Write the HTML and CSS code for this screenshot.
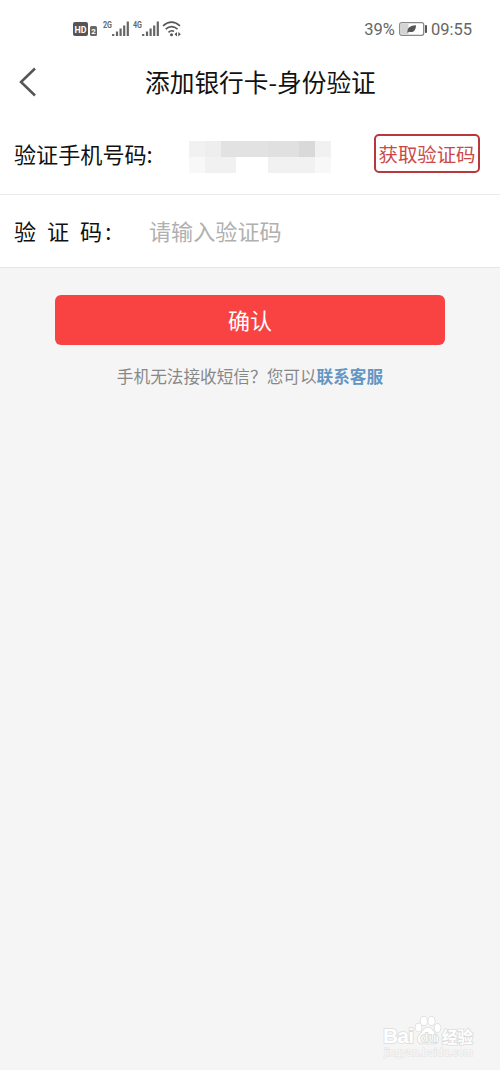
FILE: index.html
```html
<!DOCTYPE html>
<html lang="zh-CN">
<head>
    <meta charset="UTF-8">
    <title>添加银行卡-身份验证</title>
    <link rel="stylesheet" href="styles.css">
</head>
<body>
    <div class="status-bar">
        <svg class="signals" width="112" height="24" viewBox="0 0 112 24">
            <rect x="1" y="5" width="15" height="14" rx="2" fill="#555"/>
            <text x="8.5" y="15.5" class="hd" textLength="12" lengthAdjust="spacingAndGlyphs">HD</text>
            <rect x="18" y="9" width="7" height="10" rx="1.5" fill="#666"/>
            <text x="21.5" y="17" class="sim">2</text>
            <text x="31" y="11" class="net" textLength="9" lengthAdjust="spacingAndGlyphs">2G</text>
            <path d="M41.2 17v2M45 14.5v4.5M48.6 11.5v7.5M52.2 8.5v10.5M55.800 4.500v14.500" class="bars"/>
            <text x="61" y="11" class="net" textLength="9" lengthAdjust="spacingAndGlyphs">4G</text>
            <path d="M71.200 17v2M75 14.500v4.500M78.600 11.500v7.500M82.200 8.500v10.500M85.800 4.500v14.500" class="bars"/>
            <path d="M91 8.800Q99.500 1.500 108 8.800M93.700 12.200Q99.500 7.200 105.600 12.200M96.500 15.300Q99.500 12.700 102 14.500" class="wifi"/>
            <circle cx="99.500" cy="17.700" r="1.500" fill="#555"/>
            <path d="M105 15l-2.500 2.200 2.500 2.200zM106.300 15l2.500 2.200-2.500 2.200z" fill="#555"/>
        </svg>
        <div class="power">
            <span>39%</span>
            <svg width="28" height="14" viewBox="0 0 28 14">
                <rect x="0.700" y="0.700" width="24" height="12.600" rx="2" fill="#fff" stroke="#888" stroke-width="1.300"/>
                <rect x="1.500" y="1.500" width="8" height="11" fill="#d4d4d4"/>
                <path d="M8.500 11C8 5.500 11 3.500 17 3.200C17 8.500 14 11 10 9.800z" fill="#555"/>
                <rect x="26" y="3" width="2" height="8" rx="0.800" fill="#555"/>
            </svg>
            <span>09:55</span>
        </div>
    </div>

    <div class="header">
        <svg class="back" width="18" height="30" viewBox="0 0 18 30">
            <path d="M16 1.500L2 15l14 13.500" fill="none" stroke="#555" stroke-width="2.500"/>
        </svg>
        <h1>添加银行卡-身份验证</h1>
    </div>

    <form class="verify-form">
        <div class="row phone">
            <label>验证手机号码:</label>
            <div class="mosaic">
                <i class="c2"></i><i class="c3"></i><i class="c4"></i><i class="c4"></i><i class="c4"></i><i class="c5"></i><i class="c5"></i><i class="c6"></i><i class="c2"></i>
                <i class="c1"></i><i class="c2"></i><i class="c2"></i><i></i><i></i><i class="c2"></i><i class="c2"></i><i class="c2"></i><i class="c1"></i>
            </div>
            <button type="button" class="get-code">获取验证码</button>
        </div>
        <div class="row code">
            <label for="code">验 证 码<span class="colon">:</span></label>
            <input type="text" id="code" placeholder="请输入验证码">
        </div>
        <button type="button" class="confirm">确认</button>
    </form>

    <p class="hint">手机无法接收短信？您可以<a href="#">联系客服</a></p>

    <svg class="watermark" width="100" height="46" viewBox="0 0 100 46">
        <g class="mark">
            <text x="3" y="27" class="brand" textLength="31">Bai</text>
            <ellipse cx="38.500" cy="11.500" rx="3" ry="4"/>
            <ellipse cx="43.800" cy="5" rx="3.200" ry="4.300"/>
            <ellipse cx="51.500" cy="5" rx="3.200" ry="4.300"/>
            <ellipse cx="57.500" cy="12" rx="3" ry="4"/>
            <path d="M48 11.500c-4 0-5 4-8 7c-3.500 3.500-3 9.500 3 9h10c6 .5 6.500-5.500 3-9c-3-3-4-7-8-7z"/>
            <text x="62" y="27" class="exp" textLength="31">经验</text>
        </g>
        <text x="40.500" y="25.500" class="du">du</text>
        <text x="4" y="40" class="url" textLength="89">jingyan.baidu.com</text>
    </svg>
</body>
</html>
```

FILE: styles.css
```css
* {
    box-sizing: border-box;
}

body {
    display: flex;
    flex-direction: column;
    height: 1070px;
    margin: 0;
    background-color: #f5f5f5;
    font-family: "Noto Sans CJK SC", sans-serif;
    color: #111;
}

.status-bar {
    display: flex;
    justify-content: space-between;
    align-items: center;
    height: 58px;
    padding: 0 28px 0 72px;
    background-color: #fff;
}

.power {
    display: flex;
    align-items: center;
    gap: 4px;
    font: 16.5px Roboto, sans-serif;
    color: #666;
}

.hd {
    font: bold 9.5px Roboto, sans-serif;
    fill: #fff;
    text-anchor: middle;
}

.sim {
    font: bold 8px Roboto, sans-serif;
    fill: #fff;
    text-anchor: middle;
}

.net {
    font: bold 9.5px Roboto, sans-serif;
    fill: #666;
}

.bars {
    stroke: #666;
    stroke-width: 2.2;
}

.wifi {
    fill: none;
    stroke: #555;
    stroke-width: 1.6;
}

.header {
    display: flex;
    align-items: center;
    height: 47px;
    padding-left: 19px;
    background-color: #fff;
}

h1 {
    margin: -2px 0 0 108px;
    font-size: 24.7px;
    font-weight: 400;
    line-height: 36px;
}

.row {
    display: flex;
    align-items: center;
    padding-left: 14px;
    background-color: #fff;
    font-size: 22.1px;
    line-height: 32px;
}

.phone {
    height: 90px;
    padding-top: 8px;
    padding-right: 20px;
    border-bottom: 1px solid #ebebeb;
}

.phone label {
    width: 175px;
    margin-top: -2px;
}

.mosaic {
    display: grid;
    grid-template-columns: repeat(9, 1fr);
    grid-template-rows: 16px 16px;
    width: 142px;
    margin-top: 7px;
}

.c1 { background-color: #f8f8f8; }
.c2 { background-color: #f1f1f1; }
.c3 { background-color: #eeeeee; }
.c4 { background-color: #e2e2e2; }
.c5 { background-color: #e0e0e0; }
.c6 { background-color: #d9d9d9; }

.get-code {
    width: 106px;
    height: 39px;
    margin-top: -1px;
    margin-left: auto;
    padding: 1px 0 0;
    border: 2px solid #b8393b;
    border-radius: 5px;
    background-color: #fff;
    font: 19.4px "Noto Sans CJK SC", sans-serif;
    color: #cb4a47;
}

.code {
    height: 73px;
    padding-bottom: 2px;
    border-bottom: 1px solid #e6e6e6;
}

.code label {
    width: 135px;
    word-spacing: 6px;
}

.colon {
    margin-left: 3px;
}

#code {
    width: 300px;
    padding: 0;
    border: 0;
    outline: 0;
    background: none;
    font: inherit;
}

#code::placeholder {
    color: #b0b0b0;
}

.confirm {
    display: block;
    width: 390px;
    height: 50px;
    margin: 27px 0 0 55px;
    padding: 0 0 2px;
    border: 0;
    border-radius: 6px;
    background-color: #f94343;
    font: 22px "Noto Sans CJK SC", sans-serif;
    color: #fff;
}

.hint {
    margin: 19px 0 0;
    font-size: 16.65px;
    line-height: 25px;
    text-align: center;
    color: #888;
}

.hint a {
    font-weight: 700;
    color: #6496c3;
    text-decoration: none;
}

.watermark {
    margin: auto 20px 8px auto;
}

.mark {
    fill: #fff;
    stroke: #dcdcdc;
    stroke-width: 1.6;
    paint-order: stroke;
}

.brand {
    font: bold 21px "Liberation Sans", sans-serif;
}

.exp {
    font: bold 15.5px "Noto Sans CJK SC", sans-serif;
}

.du {
    font: bold 13px "Liberation Sans", sans-serif;
    fill: #f5f5f5;
    stroke: #d4d4d4;
    stroke-width: 1.4;
    paint-order: stroke;
}

.url {
    font: 11px "Liberation Sans", sans-serif;
    fill: #fafafa;
    stroke: #e4e4e4;
    stroke-width: 1.2;
    paint-order: stroke;
}
```
